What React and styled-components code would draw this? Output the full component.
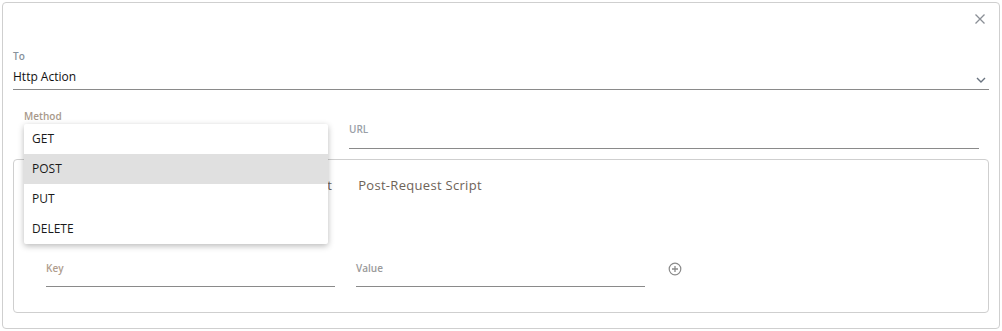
import React from 'react'
import styled, { createGlobalStyle } from 'styled-components'

const Global = createGlobalStyle`
  body {
    margin: 0;
    background: #fff;
    font-family: "Open Sans", "Liberation Sans", sans-serif;
  }
`

const methods = ['GET', 'POST', 'PUT', 'DELETE']
const tabs = ['Headers', 'Body', 'Pre-Request Script', 'Post-Request Script']

function CloseIcon() {
  return (
    <svg width="12" height="12" viewBox="0 0 12 12">
      <path d="M1.5 1.5 L10.5 10.5 M10.5 1.5 L1.5 10.5" stroke="#8a8f96" strokeWidth="1.3" fill="none" />
    </svg>
  )
}

function Chevron() {
  return (
    <svg width="10" height="6" viewBox="0 0 10 6">
      <path d="M1 1 L5 5 L9 1" stroke="#6a7480" strokeWidth="1.4" fill="none" />
    </svg>
  )
}

function PlusCircle() {
  return (
    <svg width="14" height="14" viewBox="0 0 14 14">
      <circle cx="7" cy="7" r="5.8" stroke="#8a8a8a" strokeWidth="1.2" fill="none" />
      <path d="M7 4 V10 M4 7 H10" stroke="#8a8a8a" strokeWidth="1.3" fill="none" />
    </svg>
  )
}

function App() {
  return (
    <>
      <Global />
      <Card>
        <CloseRow>
          <CloseButton><CloseIcon /></CloseButton>
        </CloseRow>
        <Label color="#87919c">To</Label>
        <Select>
          <span>Http Action</span>
          <Chevron />
        </Select>

        <FieldRow>
          <MethodField>
            <Label color="#a8998b">Method</Label>
            <Input />
            <Menu>
              {methods.map((m) => (
                <MenuItem key={m} active={m === 'POST'}>{m}</MenuItem>
              ))}
            </Menu>
          </MethodField>
          <UrlField>
            <Label color="#9a9fa7">URL</Label>
            <Input small />
          </UrlField>
        </FieldRow>

        <Panel>
          <Tabs>
            {tabs.map((t) => (
              <Tab key={t}>{t}</Tab>
            ))}
          </Tabs>
          <PairRow>
            <PairField>
              <Label color="#b09d8d">Key</Label>
              <Input small />
            </PairField>
            <PairField>
              <Label color="#9a9a9a">Value</Label>
              <Input small />
            </PairField>
            <AddButton><PlusCircle /></AddButton>
          </PairRow>
        </Panel>
      </Card>
    </>
  )
}

export default App

const Card = styled.div`
  margin: 2px;
  width: 998px;
  height: 327px;
  box-sizing: border-box;
  border: 1px solid #cfcfcf;
  border-radius: 4px;
  padding: 0 10px 15px 10px;
  display: flex;
  flex-direction: column;
`

const CloseRow = styled.div`
  height: 46px;
  display: flex;
  justify-content: flex-end;
  align-items: flex-start;
  padding-top: 10px;
  box-sizing: border-box;
`

const CloseButton = styled.div`
  width: 12px;
  height: 12px;
  margin-right: 3px;
  display: flex;
`

const Label = styled.div`
  font-size: 10px;
  font-weight: 600;
  line-height: 14px;
  color: ${(p) => p.color};
`

const Select = styled.div`
  display: flex;
  justify-content: space-between;
  align-items: center;
  font-size: 12px;
  line-height: 18px;
  color: #111;
  padding: 5px 3px 3px 0;
  border-bottom: 1px solid #8a8a8a;

  svg {
    margin-top: 6px;
  }
`

const FieldRow = styled.div`
  display: flex;
  gap: 21px;
  padding: 19px 10px 0 11px;
`

const MethodField = styled.div`
  position: relative;
  width: 304px;
  display: flex;
  flex-direction: column;
`

const UrlField = styled.div`
  flex: 1;
  display: flex;
  flex-direction: column;
  padding-top: 13px;
`

const Input = styled.div`
  height: ${(p) => (p.small ? '12px' : '25px')};
  border-bottom: 1px solid #8a8a8a;
`

const Menu = styled.div`
  position: absolute;
  top: 15px;
  left: 0;
  width: 304px;
  background: #fff;
  box-shadow: 0 2px 6px rgba(0, 0, 0, 0.28);
  z-index: 2;
  border-radius: 2px;
`

const MenuItem = styled.div`
  height: 30px;
  line-height: 30px;
  padding-left: 8px;
  font-size: 12px;
  color: #1a1a1a;
  background: ${(p) => (p.active ? '#e0e0e0' : 'transparent')};
`

const Panel = styled.div`
  margin-top: 10px;
  height: 154px;
  box-sizing: border-box;
  border: 1px solid #cfcfcf;
  border-radius: 4px;
  padding: 0 0 25px 32px;
  display: flex;
  flex-direction: column;
`

const Tabs = styled.div`
  height: 40px;
  display: flex;
  gap: 26px;
  padding-top: 16px;
  padding-left: 32px;
  box-sizing: border-box;
`

const Tab = styled.div`
  font-size: 13px;
  line-height: 18px;
  letter-spacing: 0.3px;
  color: #6e6358;
  white-space: nowrap;
`

const PairRow = styled.div`
  margin-top: 61px;
  display: flex;
  align-items: flex-start;
  gap: 21px;
`

const PairField = styled.div`
  width: 289px;
  display: flex;
  flex-direction: column;

  & > div:last-child {
    height: 11px;
  }
`

const AddButton = styled.div`
  margin-left: 2px;
  margin-top: 1px;
  display: flex;
`
